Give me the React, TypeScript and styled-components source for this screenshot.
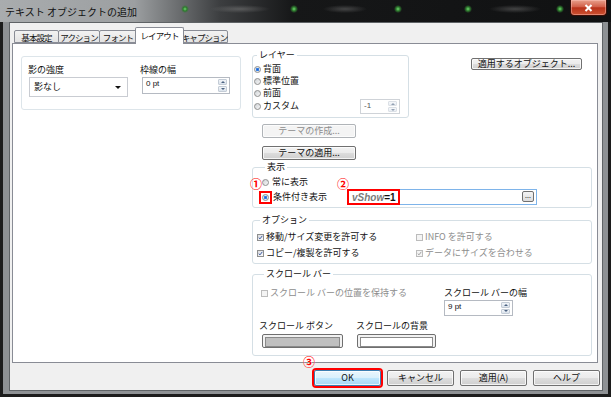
import React from 'react'
import styled, { createGlobalStyle } from 'styled-components'

const GlobalStyle = createGlobalStyle`
  html, body { margin: 0; padding: 0; background: #1c1c1c; }
  body {
    font-family: "Noto Sans CJK JP", "Noto Sans", sans-serif;
    font-size: 9px;
    color: #111;
  }
  * { box-sizing: border-box; }
`

const Window = styled.div`
  width: 611px;
  height: 397px;
  display: flex;
  flex-direction: column;
  background: #1c1c1c;
  overflow: hidden;
`

const TitleBar = styled.div`
  height: 22px;
  flex: none;
  display: flex;
  justify-content: space-between;
  align-items: flex-start;
  padding-left: 5px;
  background:
    radial-gradient(circle at 185px 9px, #6fd86f 0, #2e7a2e 2px, transparent 4px),
    radial-gradient(circle at 294px 9px, #6fd86f 0, #2e7a2e 2px, transparent 4px),
    radial-gradient(circle at 398px 9px, #6fd86f 0, #2e7a2e 2px, transparent 4px),
    radial-gradient(circle at 468px 9px, #6fd86f 0, #2e7a2e 2px, transparent 4px),
    radial-gradient(circle at 560px 9px, #6fd86f 0, #2e7a2e 2px, transparent 4px),
    radial-gradient(ellipse 30px 4px at 240px 9px, rgba(140, 140, 140, 0.45), transparent),
    radial-gradient(ellipse 22px 4px at 345px 9px, rgba(140, 140, 140, 0.4), transparent),
    radial-gradient(ellipse 26px 4px at 515px 9px, rgba(140, 140, 140, 0.4), transparent),
    linear-gradient(90deg, #a9acae 0, #9c9fa1 22%, #3c3e40 36%, #161718 48%, #101112 100%);
`

const Title = styled.span`
  margin-top: 6px;
  font-size: 10px;
  line-height: 12px;
  color: #111;
`

const CloseBtn = styled.div`
  width: 37px;
  height: 16px;
  margin-right: 4px;
  border: 1px solid #3b0e06;
  border-top: none;
  border-radius: 0 0 4px 4px;
  background: linear-gradient(#e8a08c, #d2604a 45%, #b8321a 52%, #cc5232);
  display: flex;
  align-items: center;
  justify-content: center;
  box-shadow: inset 0 0 0 1px rgba(255, 200, 190, 0.45);
`

const FrameOuter = styled.div`
  flex: 1;
  display: flex;
  padding: 0 3px 3px 3px;
  background: #1c1c1c;
`

const Frame = styled.div`
  flex: 1;
  display: flex;
  padding: 0 5px 3px 6px;
  background: #8e9194;
`

const Body = styled.div`
  flex: 1;
  display: flex;
  flex-direction: column;
  background: #f0f0f0;
  border: 1px solid #5f6366;
  padding: 4px 4px 0 2px;
`

const TabStrip = styled.div`
  display: flex;
  align-items: flex-end;
  height: 16px;
  padding-left: 2px;
`

const Tab = styled.div<{ $w: number; $active?: boolean }>`
  width: ${p => p.$w}px;
  height: ${p => (p.$active ? 17 : 13)}px;
  margin: ${p => (p.$active ? '0 -2px -1px -2px' : '0 0 0 -1px')};
  z-index: ${p => (p.$active ? 2 : 1)};
  border: 1px solid #898c95;
  border-bottom: ${p => (p.$active ? 'none' : '1px solid #898c95')};
  border-radius: 2px 2px 0 0;
  background: ${p => (p.$active ? '#fff' : 'linear-gradient(#f2f2f2, #e3e3e3)')};
  display: flex;
  align-items: center;
  justify-content: center;
  font-size: 8.5px;
  line-height: 12px;
  white-space: nowrap;
  letter-spacing: -0.9px;
  padding-bottom: ${p => (p.$active ? 2 : 0)}px;
  &:first-child { margin-left: 0; }
`

const Panel = styled.div`
  height: 320px;
  background: #fff;
  border: 1px solid #898c95;
  display: grid;
  grid-template-columns: 220px 340px;
  column-gap: 11px;
  align-items: start;
  padding: 6px 5px 0 8px;
`

const LeftBox = styled.div`
  margin-top: 6px;
  border: 1px solid #dde5ea;
  border-radius: 3px;
  padding: 7px 6px 12px 6px;
  display: grid;
  grid-template-columns: 112px 1fr;
`

const Field = styled.div`
  display: flex;
  flex-direction: column;
`

const Label = styled.span<{ $disabled?: boolean }>`
  line-height: 12px;
  white-space: nowrap;
  color: ${p => (p.$disabled ? '#8d8d8d' : '#111')};
`

const Select = styled.div`
  width: 99px;
  height: 20px;
  margin: 1px 0 0 1px;
  border: 1px solid #c9ccd2;
  background: #fff;
  display: flex;
  align-items: center;
  justify-content: space-between;
  padding: 0 6px 0 4px;
  line-height: 12px;
`

const Caret = styled.span`
  width: 0;
  height: 0;
  border-left: 3px solid transparent;
  border-right: 3px solid transparent;
  border-top: 3px solid #111;
`

const SpinField = styled.div<{ $w: number; $h: number; $disabled?: boolean; $ml?: number; $mr?: number }>`
  width: ${p => p.$w}px;
  height: ${p => p.$h}px;
  margin: 1px ${p => p.$mr ?? 0}px 0 ${p => p.$ml ?? 0}px;
  border: 1px solid ${p => (p.$disabled ? '#cfd3d8' : '#b5bac2')};
  background: #fff;
  display: flex;
  justify-content: space-between;
  padding: 1px 2px 1px 3px;
  font-family: "Liberation Sans", Arial, sans-serif;
  font-size: 8px;
  line-height: 10px;
  color: ${p => (p.$disabled ? '#555' : '#111')};
`

const SpinBtns = styled.div<{ $disabled?: boolean }>`
  width: 9px;
  display: flex;
  flex-direction: column;
  gap: 1px;
  opacity: ${p => (p.$disabled ? 0.6 : 1)};
`

const SpinHalf = styled.div<{ $down?: boolean }>`
  flex: 1;
  display: flex;
  align-items: center;
  justify-content: center;
  border: 1px solid #c4ccd6;
  border-radius: 1px;
  background: linear-gradient(#f1f4f8, #dbe3ec);
  &::after {
    content: '';
    border-left: 2px solid transparent;
    border-right: 2px solid transparent;
    ${p => (p.$down ? 'border-top: 2px solid #4c6382;' : 'border-bottom: 2px solid #4c6382;')}
  }
`

const RightCol = styled.div`
  display: flex;
  flex-direction: column;
`

const TopRow = styled.div`
  display: flex;
  align-items: flex-start;
`

const Group = styled.fieldset<{ $w?: number; $mt?: number; $pad: string }>`
  margin: ${p => p.$mt ?? 0}px 0 0 0;
  width: ${p => (p.$w ? `${p.$w}px` : 'auto')};
  min-width: 0;
  border: 1px solid #d5dfe5;
  border-radius: 3px;
  padding: ${p => p.$pad};
  display: flex;
  flex-direction: column;
`

const Legend = styled.legend`
  padding: 0 2px;
  margin-left: 3px;
  line-height: 10px;
  font-size: 9px;
`

const Row = styled.div<{ $h: number; $gap?: number; $start?: boolean }>`
  height: ${p => p.$h}px;
  margin-top: ${p => p.$gap ?? 0}px;
  display: flex;
  align-items: center;
  justify-content: ${p => (p.$start ? 'flex-start' : 'space-between')};
  position: relative;
`

const Choice = styled.label<{ $w?: number; $gap?: number }>`
  display: inline-flex;
  align-items: center;
  gap: ${p => p.$gap ?? 2}px;
  width: ${p => (p.$w ? `${p.$w}px` : 'auto')};
  flex: none;
  line-height: 12px;
  white-space: nowrap;
`

const RadioDot = styled.span<{ $checked?: boolean }>`
  width: 7px;
  height: 7px;
  flex: none;
  border-radius: 50%;
  border: 1px solid #8e8f8f;
  background: ${p =>
    p.$checked
      ? 'radial-gradient(circle, #1b5fd1 0, #3b86e8 1.4px, #dfe6ee 2px)'
      : 'linear-gradient(135deg, #cfd3d7, #f7f7f7)'};
`

const CheckBox = styled.span<{ $disabled?: boolean }>`
  width: 7px;
  height: 7px;
  flex: none;
  border: 1px solid ${p => (p.$disabled ? '#bcbcbc' : '#8e8f8f')};
  background: ${p => (p.$disabled ? '#f4f4f4' : 'linear-gradient(135deg, #dcdde0, #fbfbfb)')};
  display: flex;
  align-items: center;
  justify-content: center;
`

const Btn = styled.button<{ $w: number; $h: number; $disabled?: boolean; $primary?: boolean }>`
  width: ${p => p.$w}px;
  height: ${p => p.$h}px;
  padding: 0;
  margin: 0;
  flex: none;
  position: relative;
  font-family: inherit;
  font-size: 9px;
  line-height: 10px;
  white-space: nowrap;
  color: ${p => (p.$disabled ? '#8d8d8d' : '#111')};
  border: 1px solid ${p => (p.$disabled ? '#b0b4b8' : p.$primary ? '#3c7fb1' : '#707070')};
  border-radius: 2px;
  background: ${p =>
    p.$disabled
      ? '#f4f4f4'
      : p.$primary
        ? 'linear-gradient(#eaf6fd, #d9f0fc 50%, #bee6fd 51%, #a7d9f5)'
        : 'linear-gradient(#f2f2f2, #ebebeb 50%, #dddddd 51%, #cfcfcf)'};
  box-shadow: inset 0 0 0 1px rgba(255, 255, 255, 0.75);
  outline: ${p => (p.$primary ? '2px solid #f00' : 'none')};
  outline-offset: 0;
`

const ApplyBtn = styled(Btn)`
  margin: 8px 10px 0 auto;
`

const ThemeBtn = styled(Btn)<{ $mt: number }>`
  margin: ${p => p.$mt}px 0 0 10px;
`

const CondInput = styled.div`
  width: 190px;
  height: 16px;
  border: 1px solid #7eb4ea;
  background: #fff;
  display: flex;
  align-items: stretch;
  justify-content: space-between;
`

const RedValue = styled.span`
  margin: -1px 0 -1px -1px;
  border: 2px solid #f00;
  padding: 0 2px 0 3px;
  display: flex;
  align-items: center;
  font-family: "Liberation Sans", Arial, sans-serif;
  font-weight: bold;
  font-size: 10px;
  i { color: #7b7b7b; }
`

const DotsBtn = styled.span`
  width: 12px;
  height: 11px;
  margin: 1px 2px 0 0;
  border: 1px solid #707070;
  border-radius: 2px;
  background: linear-gradient(#f4f4f4, #dcdcdc);
  font-size: 7px;
  line-height: 6px;
  text-align: center;
`

const RedRing = styled.span`
  border: 2px solid #f00;
  padding: 1px;
  margin-left: -3px;
  display: inline-flex;
`

const Mark = styled.span<{ $x: number; $y: number }>`
  position: absolute;
  left: ${p => p.$x}px;
  top: ${p => p.$y}px;
  color: #f00;
  font-size: 12px;
  line-height: 12px;
  font-weight: bold;
  text-shadow: 0 0 1px #fff;
  pointer-events: none;
`

const OptGrid = styled.div`
  display: grid;
  grid-template-columns: 159px 1fr;
  grid-auto-rows: 14px;
  row-gap: 2px;
  align-items: center;
`

const ScrollTop = styled.div`
  display: grid;
  grid-template-columns: 183px 1fr;
  align-items: start;
`

const SwatchGrid = styled.div`
  display: grid;
  grid-template-columns: 97px 1fr;
  margin: 4px 0 0 -2px;
`

const Swatch = styled.div<{ $w: number; $fill: string; $ml: number }>`
  width: ${p => p.$w}px;
  height: 14px;
  margin: 2px 0 0 ${p => p.$ml}px;
  border: 1px solid #6f6f6f;
  border-radius: 2px;
  padding: 2px;
  background: #f2f2f2;
  &::after {
    content: '';
    display: block;
    height: 100%;
    border: 1px solid #8a8a8a;
    background: ${p => p.$fill};
  }
`

const ButtonRow = styled.div`
  display: flex;
  justify-content: flex-end;
  gap: 6px;
  margin: 7px -2px 0 0;
`

function Radio({ checked }: { checked?: boolean }) {
  return <RadioDot $checked={checked} />
}

function Check({ checked, disabled }: { checked?: boolean; disabled?: boolean }) {
  return (
    <CheckBox $disabled={disabled}>
      {checked && (
        <svg width="7" height="7" viewBox="0 0 7 7">
          <path d="M1 3.6 L2.8 5.4 L6 1.2" fill="none" stroke={disabled ? '#9a9a9a' : '#2f4f9e'} strokeWidth="1.3" />
        </svg>
      )}
    </CheckBox>
  )
}

function Spinner(props: { value: string; w: number; h: number; disabled?: boolean; ml?: number; mr?: number }) {
  const { value, w, h, disabled, ml, mr } = props
  return (
    <SpinField $w={w} $h={h} $disabled={disabled} $ml={ml} $mr={mr}>
      <span>{value}</span>
      <SpinBtns $disabled={disabled}>
        <SpinHalf />
        <SpinHalf $down />
      </SpinBtns>
    </SpinField>
  )
}

export default function App() {
  return (
    <>
      <GlobalStyle />
      <Window>
        <TitleBar>
          <Title>テキスト オブジェクトの追加</Title>
          <CloseBtn>
            <svg width="9" height="8" viewBox="0 0 9 8">
              <path d="M1.5 1 L7.5 7 M7.5 1 L1.5 7" stroke="#fff" strokeWidth="2" />
            </svg>
          </CloseBtn>
        </TitleBar>
        <FrameOuter>
          <Frame>
            <Body>
              <TabStrip>
                <Tab $w={45}>基本設定</Tab>
                <Tab $w={42}>アクション</Tab>
                <Tab $w={38}>フォント</Tab>
                <Tab $w={49} $active>レイアウト</Tab>
                <Tab $w={47}>キャプション</Tab>
              </TabStrip>

              <Panel>
                <LeftBox>
                  <Field>
                    <Label>影の強度</Label>
                    <Select>
                      <span>影なし</span>
                      <Caret />
                    </Select>
                  </Field>
                  <Field>
                    <Label>枠線の幅</Label>
                    <Spinner value="0 pt" w={88} h={17} ml={2} />
                  </Field>
                </LeftBox>

                <RightCol>
                  <TopRow>
                    <Group $w={157} $pad="3px 0 4px 1px">
                      <Legend>レイヤー</Legend>
                      <Row $h={12}>
                        <Choice><Radio checked />背面</Choice>
                      </Row>
                      <Row $h={12}>
                        <Choice><Radio />標準位置</Choice>
                      </Row>
                      <Row $h={12}>
                        <Choice><Radio />前面</Choice>
                      </Row>
                      <Row $h={14}>
                        <Choice><Radio />カスタム</Choice>
                        <Spinner value="-1" w={40} h={15} disabled mr={8} />
                      </Row>
                    </Group>
                    <ApplyBtn $w={111} $h={12}>適用するオブジェクト...</ApplyBtn>
                  </TopRow>

                  <ThemeBtn $w={94} $h={14} $mt={6} $disabled>テーマの作成...</ThemeBtn>
                  <ThemeBtn $w={94} $h={14} $mt={8}>テーマの適用...</ThemeBtn>

                  <Group $mt={2} $pad="4px 0 2px 9px">
                    <Legend>表示</Legend>
                    <Row $h={12}>
                      <Choice $gap={3}><Radio />常に表示</Choice>
                    </Row>
                    <Row $h={16} $gap={1} $start>
                      <Mark $x={-12} $y={-11}>①</Mark>
                      <Choice $w={85} $gap={1}>
                        <RedRing><Radio checked /></RedRing>
                        条件付き表示
                      </Choice>
                      <Mark $x={75} $y={-11}>②</Mark>
                      <CondInput>
                        <RedValue><i>vShow</i>=1</RedValue>
                        <DotsBtn>...</DotsBtn>
                      </CondInput>
                    </Row>
                  </Group>

                  <Group $mt={7} $pad="5px 0 3px 4px">
                    <Legend>オプション</Legend>
                    <OptGrid>
                      <Choice><Check checked />移動/サイズ変更を許可する</Choice>
                      <Choice><Check disabled /><Label $disabled>INFO を許可する</Label></Choice>
                      <Choice><Check checked />コピー/複製を許可する</Choice>
                      <Choice><Check checked disabled /><Label $disabled>データにサイズを合わせる</Label></Choice>
                    </OptGrid>
                  </Group>

                  <Group $mt={5} $pad="8px 0 7px 8px">
                    <Legend>スクロール バー</Legend>
                    <ScrollTop>
                      <Choice><Check disabled /><Label $disabled>スクロール バーの位置を保持する</Label></Choice>
                      <Field>
                        <Label>スクロール バーの幅</Label>
                        <Spinner value="9 pt" w={69} h={16} />
                      </Field>
                    </ScrollTop>
                    <SwatchGrid>
                      <Field>
                        <Label>スクロール ボタン</Label>
                        <Swatch $w={81} $fill="#c0c0c0" $ml={3} />
                      </Field>
                      <Field>
                        <Label>スクロールの背景</Label>
                        <Swatch $w={79} $fill="#ffffff" $ml={1} />
                      </Field>
                    </SwatchGrid>
                  </Group>
                </RightCol>
              </Panel>

              <ButtonRow>
                <Btn $w={67} $h={16} $primary>
                  <Mark $x={-12} $y={-15}>③</Mark>
                  OK
                </Btn>
                <Btn $w={67} $h={16}>キャンセル</Btn>
                <Btn $w={67} $h={16}>適用(A)</Btn>
                <Btn $w={67} $h={16}>ヘルプ</Btn>
              </ButtonRow>
            </Body>
          </Frame>
        </FrameOuter>
      </Window>
    </>
  )
}
